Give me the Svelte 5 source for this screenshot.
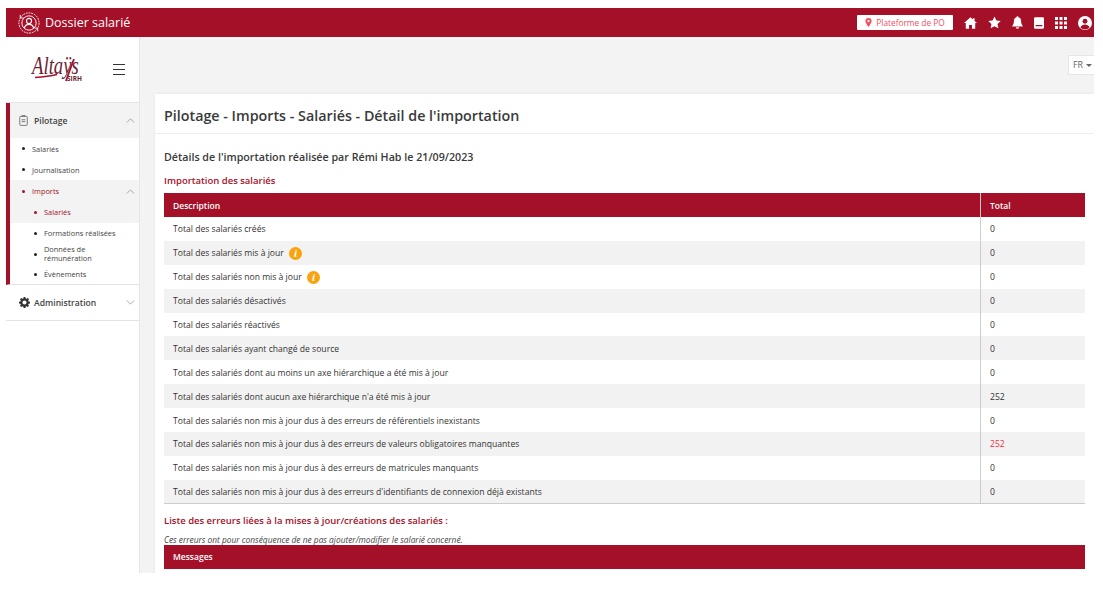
<script>
  const rows = [
    { label: 'Total des salariés créés', total: '0' },
    { label: 'Total des salariés mis à jour', total: '0', info: true },
    { label: 'Total des salariés non mis à jour', total: '0', info: true },
    { label: 'Total des salariés désactivés', total: '0' },
    { label: 'Total des salariés réactivés', total: '0' },
    { label: 'Total des salariés ayant changé de source', total: '0' },
    { label: 'Total des salariés dont au moins un axe hiérarchique a été mis à jour', total: '0' },
    { label: "Total des salariés dont aucun axe hiérarchique n'a été mis à jour", total: '252' },
    { label: 'Total des salariés non mis à jour dus à des erreurs de référentiels inexistants', total: '0' },
    { label: 'Total des salariés non mis à jour dus à des erreurs de valeurs obligatoires manquantes', total: '252', danger: true },
    { label: 'Total des salariés non mis à jour dus à des erreurs de matricules manquants', total: '0' },
    { label: "Total des salariés non mis à jour dus à des erreurs d'identifiants de connexion déjà existants", total: '0' }
  ];
</script>

<div class="frame">
  <header class="topbar">
    <div class="brand">
      <svg class="brand-icon" viewBox="0 0 24 24" width="22" height="22" fill="none" stroke="#fff">
        <circle cx="12" cy="12" r="11" stroke-width="1" stroke-dasharray="2 1" />
        <path d="M2.500 3v3.500H6M21.500 21v-3.500H18" stroke-width="1" />
        <circle cx="12" cy="12" r="7.800" stroke-width="1" />
        <circle cx="12" cy="9.800" r="2.800" stroke-width="1.200" />
        <path d="M7 17.500c.6-2.800 2.500-4 5-4s4.400 1.200 5 4" stroke-width="1.200" />
      </svg>
      <span>Dossier salarié</span>
    </div>
    <div class="actions">
      <div class="platform">
        <svg viewBox="0 0 12 16" width="7" height="9" fill="#f0505f"><path d="M6 0a5.500 5.500 0 0 0-5.500 5.500C.5 9.500 6 16 6 16s5.500-6.500 5.500-10.500A5.500 5.500 0 0 0 6 0zm0 7.500a2 2 0 1 1 0-4 2 2 0 0 1 0 4z" /></svg>
        <span>Plateforme de PO</span>
      </div>
      <svg viewBox="0 0 16 14" width="13" height="12" fill="#fff"><path d="M8 0 0 7h2.200v7h4V9.500h3.600V14h4V7H16L13 4.400V1h-2v1.700z" /></svg>
      <svg viewBox="0 0 24 24" width="13" height="13" fill="#fff"><path d="m12 .8 3.500 7.400 8 1-5.900 5.500 1.600 8.100-7.200-4-7.200 4 1.600-8.100L.5 9.200l8-1z" /></svg>
      <svg viewBox="0 0 14 16" width="11" height="13" fill="#fff"><path d="M7 0a1.200 1.200 0 0 0-1.200 1.300C3.600 1.900 2.400 3.700 2.400 6c0 3.500-.8 4.800-2 6v1h13.200v-1c-1.200-1.200-2-2.500-2-6 0-2.300-1.200-4.100-3.400-4.700A1.200 1.200 0 0 0 7 0zM5 14a2 2 0 0 0 4 0z" /></svg>
      <svg viewBox="0 0 12 14" width="10" height="12" fill="#fff"><path fill-rule="evenodd" d="M1.500 0h9A1.500 1.500 0 0 1 12 1.500v11a1.500 1.500 0 0 1-1.500 1.500h-9A1.500 1.500 0 0 1 0 12.500v-11A1.500 1.500 0 0 1 1.500 0zM2 9.500V11h8V9.500z" /></svg>
      <svg viewBox="0 0 12 12" width="12" height="12" fill="#fff"><path d="M0 0h3v3H0zM4.500 0h3v3h-3zM9 0h3v3H9zM0 4.500h3v3H0zM4.500 4.500h3v3h-3zM9 4.500h3v3H9zM0 9h3v3H0zM4.500 9h3v3h-3zM9 9h3v3H9z" /></svg>
      <svg viewBox="0 0 16 16" width="14" height="14"><circle cx="8" cy="8" r="8" fill="#fff" /><circle cx="8" cy="6" r="2.800" fill="#a51029" /><path d="M2.800 13c1-2.500 3-3.300 5.200-3.300s4.200.8 5.200 3.300a7 7 0 0 1-10.400 0z" fill="#a51029" /></svg>
    </div>
  </header>

  <div class="body">
    <aside class="sidebar">
      <div class="logo-zone">
        <div class="logo">
          <span class="logo-name">Altaÿs</span>
          <svg class="logo-swash" viewBox="0 0 50 27" width="50" height="27" fill="none">
            <path d="M3 21.500c8-.5 16-1.500 22-3" stroke="#a51029" stroke-width="1.300" />
            <path d="M34 25c2-6 5-14 8-22" stroke="#a51029" stroke-width="1.800" />
          </svg>
          <span class="logo-sub">SIRH</span>
        </div>
        <div class="burger"><i></i><i></i><i></i></div>
      </div>

      <nav>
        <div class="group open">
          <div class="group-head">
            <svg viewBox="0 0 12 14" width="9" height="11" fill="none" stroke="#555" stroke-width="1"><rect x="1" y="1.500" width="10" height="12" rx="1" /><path d="M4 1.500V.5h4v1M3.500 6h5M3.500 8.500h5" /></svg>
            <span>Pilotage</span>
            <svg class="chev" viewBox="0 0 10 6" width="9" height="5"><path d="M.5 5.500 5 1l4.500 4.500" fill="none" stroke="#999" /></svg>
          </div>
          <ul class="menu">
            <li><span>Salariés</span></li>
            <li><span>Journalisation</span></li>
            <li class="sub-open">
              <div class="sub-head active">
                <span>Imports</span>
                <svg class="chev" viewBox="0 0 10 6" width="9" height="5"><path d="M.5 5.500 5 1l4.500 4.500" fill="none" stroke="#999" /></svg>
              </div>
              <ul class="submenu">
                <li class="current"><span>Salariés</span></li>
                <li><span>Formations réalisées</span></li>
                <li class="tall"><span>Données de rémunération</span></li>
                <li class="last"><span>Évènements</span></li>
              </ul>
            </li>
          </ul>
        </div>
        <div class="group-head admin">
          <svg viewBox="0 0 16 16" width="11" height="11"><path fill="#333" fill-rule="evenodd" d="M6.700 0h2.600l.4 2.100 1.300.6 1.800-1.200 1.800 1.800-1.200 1.800.6 1.300 2 .4v2.600l-2 .4-.6 1.300 1.200 1.800-1.800 1.800-1.800-1.200-1.300.6-.4 2.100H6.700l-.4-2.100-1.300-.6-1.800 1.200-1.800-1.800 1.200-1.800-.6-1.300-2-.4V6.800l2-.4.6-1.300-1.200-1.800 1.800-1.800L5 2.700l1.300-.6zM8 5a3 3 0 1 0 0 6 3 3 0 0 0 0-6z" /></svg>
          <span>Administration</span>
          <svg class="chev" viewBox="0 0 10 6" width="9" height="5"><path d="M.5.500 5 5 9.500.5" fill="none" stroke="#999" /></svg>
        </div>
      </nav>
    </aside>

    <main class="content">
      <div class="lang-row">
        <div class="lang">FR <i></i></div>
      </div>
      <section class="card">
        <h1>Pilotage - Imports - Salariés - Détail de l'importation</h1>
        <div class="card-body">
          <h2>Détails de l'importation réalisée par Rémi Hab le 21/09/2023</h2>
          <h3>Importation des salariés</h3>
          <table>
            <thead>
              <tr><th>Description</th><th class="col-total">Total</th></tr>
            </thead>
            <tbody>
              {#each rows as row}
                <tr>
                  <td>
                    {row.label}
                    {#if row.info}<span class="info">i</span>{/if}
                  </td>
                  <td class="col-total" class:danger={row.danger}>{row.total}</td>
                </tr>
              {/each}
            </tbody>
          </table>
          <h3 class="errors">Liste des erreurs liées à la mises à jour/créations des salariés :</h3>
          <p class="note">Ces erreurs ont pour conséquence de ne pas ajouter/modifier le salarié concerné.</p>
          <div class="messages">Messages</div>
        </div>
      </section>
    </main>
  </div>
</div>

<style>
  :global(body) {
    margin: 0;
    background: #fff;
    font-family: 'Open Sans', sans-serif;
  }

  .frame {
    width: 1088px;
    height: 565px;
    margin: 8px 0 0 6px;
    overflow: hidden;
    display: flex;
    flex-direction: column;
    color: #3a3a3a;
  }

  .topbar {
    height: 29px;
    flex: none;
    background: #a51029;
    display: flex;
    align-items: center;
    justify-content: space-between;
    color: #fff;
  }

  .brand {
    display: flex;
    align-items: center;
    gap: 5px;
    padding-left: 12px;
    font-size: 12.500px;
  }

  .actions {
    display: flex;
    align-items: center;
    gap: 11px;
    padding-right: 2px;
  }

  .platform {
    width: 96px;
    height: 15px;
    background: #fff;
    border-radius: 1px;
    display: flex;
    align-items: center;
    justify-content: center;
    gap: 4px;
    color: #f0505f;
    font-size: 8.300px;
  }

  .body {
    flex: 1;
    display: flex;
    background: #f3f3f3;
    min-height: 0;
  }

  .sidebar {
    width: 133px;
    flex: none;
    background: #fff;
    border-right: 1px solid #e6e6e6;
  }

  .logo-zone {
    height: 66px;
    display: flex;
    align-items: center;
    justify-content: space-between;
    padding: 0 14px 0 26px;
    border-bottom: 1px solid #e4e4e4;
    box-sizing: border-box;
  }

  .logo {
    position: relative;
    width: 50px;
    height: 27px;
    margin-top: -1px;
  }

  .logo-name {
    position: absolute;
    left: 0;
    top: 0;
    font-family: 'Liberation Serif', serif;
    font-style: italic;
    font-size: 26px;
    color: #6d1f35;
    line-height: 20px;
    transform: scaleX(0.72);
    transform-origin: left center;
  }

  .logo-swash {
    position: absolute;
    left: 0;
    top: 0;
  }

  .logo-sub {
    position: absolute;
    right: 0;
    bottom: 1px;
    font-size: 6.500px;
    line-height: 6px;
    font-weight: 700;
    color: #6d1f35;
  }

  .burger {
    display: flex;
    flex-direction: column;
    gap: 3.500px;
    width: 12px;
  }

  .burger i {
    height: 1.500px;
    background: #333;
  }

  .group {
    border-left: 4px solid #a51029;
    border-bottom: 1px solid #e4e4e4;
  }

  .group-head {
    height: 35px;
    display: flex;
    align-items: center;
    background: #f3f3f3;
    font-size: 8.600px;
    font-weight: 600;
    color: #444;
    padding: 0 4px 0 9px;
    gap: 6px;
  }

  .group-head .chev,
  .sub-head .chev {
    margin-left: auto;
  }

  .admin {
    background: #fff;
    padding-left: 13px;
    gap: 4px;
    border-bottom: 1px solid #e4e4e4;
  }

  ul {
    list-style: none;
    margin: 0;
    padding: 0;
  }

  .menu > li > span,
  .sub-head,
  .submenu li {
    position: relative;
    font-size: 7.400px;
    color: #444;
    font-weight: 500;
  }

  .menu > li > span {
    display: flex;
    align-items: center;
    height: 21px;
    padding-left: 22px;
  }

  .menu > li > span::before,
  .sub-head::before,
  .submenu li::before {
    content: '';
    position: absolute;
    left: 12px;
    top: 50%;
    width: 3px;
    height: 3px;
    margin-top: -1.500px;
    border-radius: 50%;
    background: #222;
  }

  .sub-head {
    display: flex;
    align-items: center;
    height: 22px;
    padding: 0 4px 0 22px;
    background: #f3f3f3;
  }

  .sub-head.active {
    color: #a51029;
  }

  .sub-head.active::before,
  .submenu .current::before {
    background: #a51029;
  }

  .submenu li {
    display: flex;
    align-items: center;
    min-height: 21px;
    padding: 0 8px 0 34px;
    line-height: 9px;
  }

  .submenu li::before {
    left: 24px;
  }

  .submenu .current {
    background: #f3f3f3;
    color: #a51029;
  }

  .submenu .tall {
    min-height: 20px;
  }

  .submenu .last {
    min-height: 20px;
  }

  .content {
    flex: 1;
    min-width: 0;
    padding-left: 15px;
    overflow: hidden;
  }

  .lang-row {
    height: 57px;
    display: flex;
    justify-content: flex-end;
    align-items: flex-start;
    padding-top: 18px;
    box-sizing: border-box;
  }

  .lang {
    width: 26px;
    height: 20px;
    background: #fff;
    border: 1px solid #e6e6e6;
    border-right: 0;
    font-size: 8.800px;
    color: #666;
    display: flex;
    align-items: center;
    padding-left: 4px;
    gap: 3px;
    box-sizing: border-box;
  }

  .lang i {
    border-left: 3px solid transparent;
    border-right: 3px solid transparent;
    border-top: 3px solid #666;
  }

  .card {
    background: #fff;
    height: 500px;
    box-shadow: 0 0 2px #e4e4e4;
  }

  h1 {
    margin: 0;
    height: 39px;
    line-height: 43px;
    padding-left: 9px;
    font-size: 14.300px;
    font-weight: 600;
    color: #3a3a3a;
    border-bottom: 1px solid #eee;
  }

  .card-body {
    padding: 0 9px;
  }

  h2 {
    margin: 0;
    padding-top: 16px;
    font-size: 10.700px;
    line-height: 15px;
    font-weight: 600;
    color: #3a3a3a;
  }

  h3 {
    margin: 0;
    padding-top: 9px;
    font-size: 9.500px;
    line-height: 14px;
    font-weight: 600;
    color: #a51029;
  }

  table {
    width: 921px;
    margin-top: 5px;
    border-collapse: collapse;
    table-layout: fixed;
    font-size: 8.600px;
    border-bottom: 1px solid #ccc;
  }

  th {
    height: 24px;
    padding: 0 0 0 9px;
    background: #a51029;
    color: #fff;
    text-align: left;
    font-size: 8.500px;
    font-weight: 600;
  }

  td {
    height: 23.900px;
    box-sizing: border-box;
    padding: 1px 0 0 9px;
    color: #333;
  }

  tbody tr:nth-child(even) {
    background: #f2f2f2;
  }

  .col-total {
    width: 95px;
    border-left: 1px solid #ccc;
  }

  .danger {
    color: #f0303f;
  }

  .info {
    display: inline-block;
    width: 13px;
    height: 13px;
    margin-left: 3px;
    border-radius: 50%;
    background: #f9a30f;
    color: #fff;
    font-family: 'Liberation Serif', serif;
    font-style: italic;
    font-weight: 700;
    font-size: 11px;
    line-height: 13px;
    text-align: center;
    vertical-align: middle;
  }

  h3.errors {
    padding-top: 10px;
  }

  .note {
    margin: 6px 0 0;
    font-size: 8.350px;
    line-height: 11px;
    font-style: italic;
    color: #444;
  }

  .messages {
    width: 912px;
    height: 24px;
    padding-left: 9px;
    background: #a51029;
    color: #fff;
    font-size: 8.500px;
    font-weight: 600;
    line-height: 24px;
  }
</style>
